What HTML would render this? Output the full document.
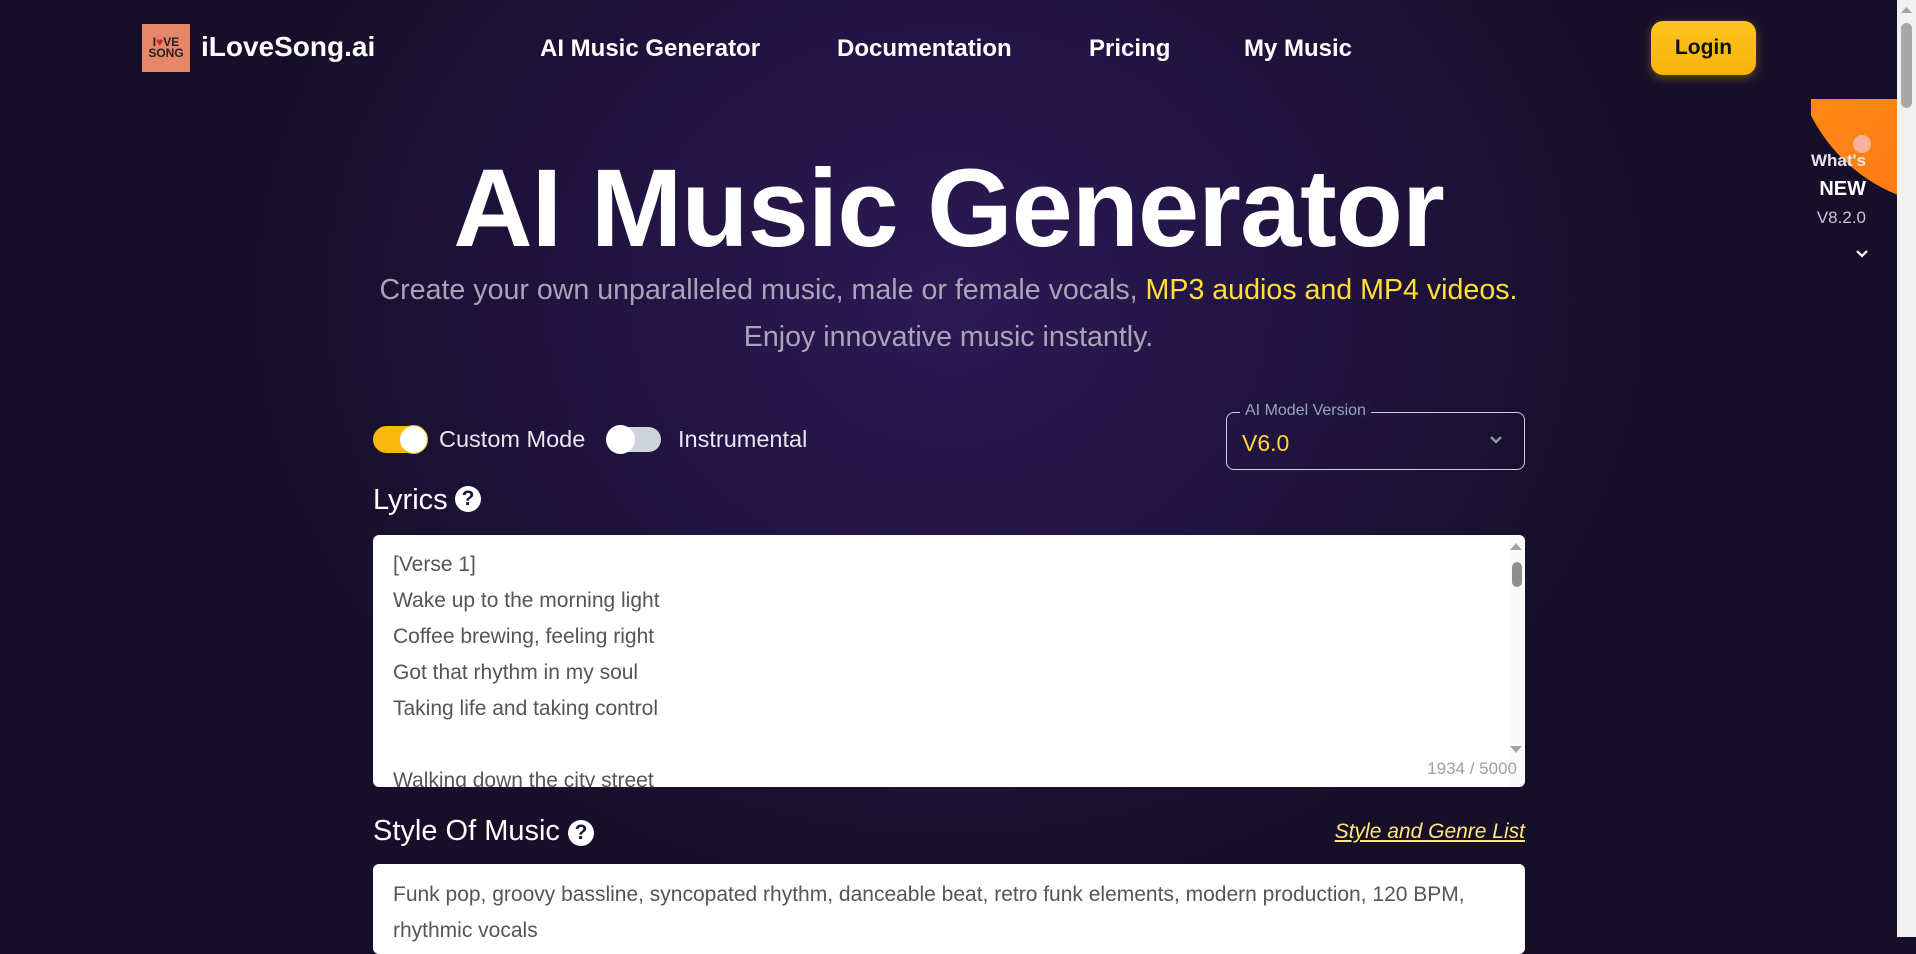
<!DOCTYPE html>
<html><head><meta charset="utf-8"><style>
*{box-sizing:border-box;margin:0;padding:0}
body{width:1916px;height:937px;overflow:hidden;font-family:"Liberation Sans",sans-serif;background:#160e28;position:relative;color:#fff}
.bg{position:absolute;inset:0;background:radial-gradient(ellipse 700px 600px at 950px 300px,#2c1a55 0%,#221443 45%,#170f2a 100%)}
.abs{position:absolute}
.nav a{position:absolute;top:35px;font-size:24px;font-weight:bold;color:#fff;text-decoration:none}
.sb{position:absolute;right:0;top:0;width:19px;height:937px;background:#f1f1f1}
.lyr div{height:36px;line-height:36px}
</style></head><body>
<div class="bg"></div>
<div class="abs" style="left:142px;top:24px;width:48px;height:48px;background:#e8866a;color:#222;font-weight:bold;font-size:12px;line-height:11px;text-align:center;padding-top:13px">I<span style="color:#d02040">♥</span>VE<br>SONG</div>
<div class="abs" style="left:201px;top:31px;font-size:28px;font-weight:bold">iLoveSong.ai</div>
<div class="nav"><a style="left:540px">AI Music Generator</a><a style="left:837px">Documentation</a><a style="left:1089px">Pricing</a><a style="left:1244px">My Music</a></div>
<div class="abs" style="left:1651px;top:21px;width:105px;height:54px;border-radius:12px;background:linear-gradient(#fdc51f,#f7b20b);box-shadow:0 3px 10px rgba(250,180,20,.35);color:#111;font-weight:bold;font-size:21px;text-align:center;line-height:54px">Login</div>
<div class="abs" style="left:1811px;top:99px;width:86px;height:103px;overflow:hidden"><div class="abs" style="left:-18px;top:-226px;width:334px;height:334px;border-radius:50%;background:linear-gradient(135deg,#ff9a10,#ff6a1a)"></div><div class="abs" style="left:42px;top:36px;width:18px;height:18px;border-radius:50%;background:#f8b39a"></div></div>
<div class="abs" style="left:1800px;top:150px;width:96px;text-align:right;padding-right:30px;font-weight:bold;font-size:17px;color:#e9e6f0;line-height:22px">What's</div>
<div class="abs" style="left:1800px;top:178px;width:96px;text-align:right;padding-right:30px;font-weight:bold;font-size:20px">NEW</div>
<div class="abs" style="left:1800px;top:208px;width:96px;text-align:right;padding-right:30px;font-size:17px;color:#c9c4d6">V8.2.0</div>
<svg class="abs" style="left:1854px;top:248px" width="16" height="12"><path d="M3 3l5 5 5-5" stroke="#fff" stroke-width="2.2" fill="none"/></svg>
<div class="abs" style="left:0;width:1897px;top:145px;text-align:center;font-size:110px;font-weight:bold;letter-spacing:-1px">AI Music Generator</div>
<div class="abs" style="left:0;width:1897px;top:274px;text-align:center;font-size:28.6px;color:#a9a4b8">Create your own unparalleled music, male or female vocals, <span style="color:#ffe033">MP3 audios and MP4 videos.</span></div>
<div class="abs" style="left:0;width:1897px;top:321px;text-align:center;font-size:28.6px;color:#a9a4b8">Enjoy innovative music instantly.</div>
<div class="abs" style="left:373px;top:426px;width:54px;height:27px;border-radius:14px;background:#f8b80f"></div>
<div class="abs" style="left:399px;top:425px;width:29px;height:29px;border-radius:50%;background:#fff;border:1px solid #f8b80f"></div>
<div class="abs" style="left:439px;top:426px;font-size:23.5px;color:#e8e6ee">Custom Mode</div>
<div class="abs" style="left:608px;top:427px;width:53px;height:25px;border-radius:13px;background:#cfd4dc"></div>
<div class="abs" style="left:606px;top:425px;width:29px;height:29px;border-radius:50%;background:#fff"></div>
<div class="abs" style="left:678px;top:426px;font-size:23.5px;color:#e8e6ee">Instrumental</div>
<div class="abs" style="left:1226px;top:412px;width:299px;height:58px;border:1px solid #cfcbe0;border-radius:8px"></div>
<div class="abs" style="left:1240px;top:402px;padding:0 5px;font-size:16px;color:#9aa3b8;background:#1f1440">AI Model Version</div>
<div class="abs" style="left:1242px;top:430px;font-size:23px;color:#ffd92e">V6.0</div>
<svg class="abs" style="left:1488px;top:434px" width="16" height="12"><path d="M3 3l5 5 5-5" stroke="#8a93a8" stroke-width="2.4" fill="none"/></svg>
<div class="abs" style="left:373px;top:484px;font-size:29px">Lyrics</div>
<div class="abs" style="left:455px;top:486px;width:26px;height:26px;border-radius:50%;background:#fff;color:#1d1338;font-weight:bold;font-size:21px;text-align:center;line-height:26px">?</div>
<div class="abs" style="left:373px;top:535px;width:1152px;height:252px;background:#fff;border-radius:6px;overflow:hidden">
<div class="lyr" style="position:absolute;left:20px;top:12px;font-size:21px;color:#555">
<div>[Verse 1]</div><div>Wake up to the morning light</div><div>Coffee brewing, feeling right</div><div>Got that rhythm in my soul</div><div>Taking life and taking control</div><div></div><div>Walking down the city street</div></div>
<div class="abs" style="right:0;top:0;width:16px;height:252px;background:#fafafa"></div>
<svg class="abs" style="right:2px;top:6px" width="14" height="10"><path d="M1 9L7 2l6 7z" fill="#a3a3a3"/></svg>
<div class="abs" style="right:3px;top:27px;width:10px;height:25px;border-radius:5px;background:#8f8f8f"></div>
<svg class="abs" style="right:2px;top:210px" width="14" height="10"><path d="M1 1l6 7 6-7z" fill="#a3a3a3"/></svg>
<div class="abs" style="right:8px;top:224px;font-size:17px;color:#a0a0a0">1934 / 5000</div>
</div>
<div class="abs" style="left:373px;top:815px;font-size:29px">Style Of Music</div>
<div class="abs" style="left:568px;top:820px;width:26px;height:26px;border-radius:50%;background:#fff;color:#1d1338;font-weight:bold;font-size:21px;text-align:center;line-height:26px">?</div>
<div class="abs" style="left:0;width:1525px;top:820px;text-align:right;font-size:21px;font-style:italic;color:#ffe77a;text-decoration:underline">Style and Genre List</div>
<div class="abs" style="left:373px;top:864px;width:1152px;height:90px;background:#fff;border-radius:6px;padding:13px 20px;font-size:21px;color:#555;line-height:36px">Funk pop, groovy bassline, syncopated rhythm, danceable beat, retro funk elements, modern production, 120 BPM, rhythmic vocals</div>
<div class="sb"><svg class="abs" style="left:3px;top:5px" width="13" height="9"><path d="M1 8L6.5 2 12 8z" fill="#a3a3a3"/></svg><div class="abs" style="left:4px;top:23px;width:11px;height:85px;border-radius:6px;background:#a8a8a8"></div></div>
</body></html>
